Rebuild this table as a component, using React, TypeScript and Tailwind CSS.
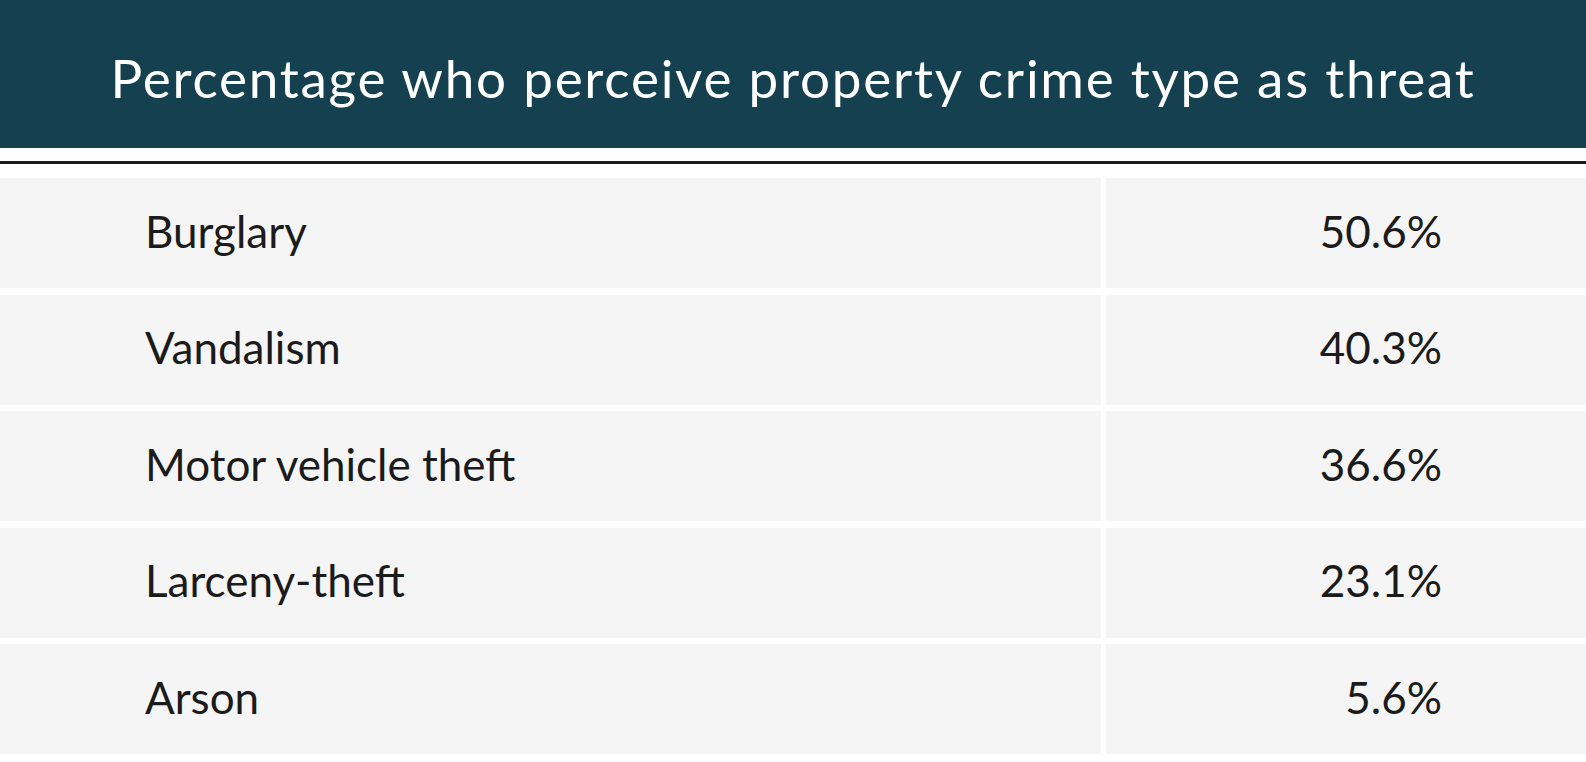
const rows = [
  { label: "Burglary", value: "50.6%" },
  { label: "Vandalism", value: "40.3%" },
  { label: "Motor vehicle theft", value: "36.6%" },
  { label: "Larceny-theft", value: "23.1%" },
  { label: "Arson", value: "5.6%" },
];

export default function App() {
  return (
    <div className="w-[1586px] h-[762px] overflow-hidden bg-white font-['Lato',sans-serif] text-[#1b1b1b]">
      <div className="h-[148px] bg-[#14404f] flex items-center justify-center">
        <h1 className="text-white text-[53px] tracking-[1.75px] leading-none pt-[6px]">Percentage who perceive property crime type as threat</h1>
      </div>
      <div className="h-[3px] bg-[#1b1b1b] mt-[13px]" />
      <div className="mt-[14px] grid grid-cols-[1101px_1fr] gap-x-[5px] gap-y-[6.5px]">
        {rows.map((row) => (
          <div key={row.label} className="contents">
            <div className="h-[110px] bg-[#f5f5f5] flex items-center pl-[145px] pb-[5px] text-[44px]">{row.label}</div>
            <div className="h-[110px] bg-[#f5f5f5] flex items-center justify-end pr-[144px] pb-[5px] text-[44px]">{row.value}</div>
          </div>
        ))}
      </div>
    </div>
  );
}
